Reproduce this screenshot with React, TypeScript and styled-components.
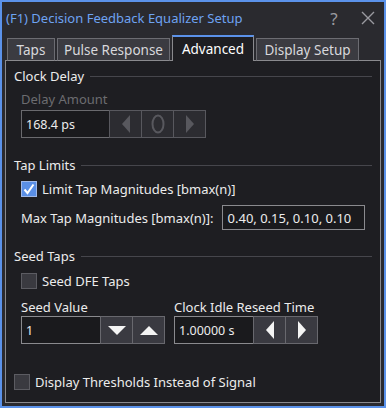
import styled, { createGlobalStyle } from 'styled-components';

const GlobalStyle = createGlobalStyle`
  body {
    margin: 0;
    background: #1e1e22;
    font-family: "Noto Sans", "DejaVu Sans", sans-serif;
  }
`;

const Tri = ({ dir, color }: { dir: 'left' | 'right' | 'up' | 'down'; color: string }) => {
  const paths: Record<string, string> = {
    left: 'M9 0 L9 18 L1 9 Z',
    right: 'M1 0 L1 18 L9 9 Z',
    down: 'M0 1 L18 1 L9 10 Z',
    up: 'M0 10 L18 10 L9 1 Z',
  };
  const horiz = dir === 'left' || dir === 'right';
  return (
    <svg width={horiz ? 10 : 18} height={horiz ? 18 : 11} viewBox={horiz ? '0 0 10 18' : '0 0 18 11'}>
      <path d={paths[dir]} fill={color} />
    </svg>
  );
};

const Zero = () => (
  <svg width="14" height="20" viewBox="0 0 14 20">
    <ellipse cx="7" cy="10" rx="5.5" ry="8.5" fill="none" stroke="#58585e" strokeWidth="2" />
  </svg>
);

const Check = () => (
  <svg width="12" height="12" viewBox="0 0 12 12">
    <path d="M1.5 6.5 L4.5 10 L10.5 1.5" fill="none" stroke="#fff" strokeWidth="2" />
  </svg>
);

const tabs = [
  { label: 'Taps', width: 48 },
  { label: 'Pulse Response', width: 113 },
  { label: 'Advanced', width: 82, active: true },
  { label: 'Display Setup', width: 103 },
];

export default function App() {
  return (
    <>
      <GlobalStyle />
      <Window>
        <TitleBar>
          <Title>(F1) Decision Feedback Equalizer Setup</Title>
          <TitleButton>?</TitleButton>
          <TitleButton>
            <svg width="14" height="14" viewBox="0 0 14 14">
              <path d="M1 1 L13 13 M13 1 L1 13" stroke="#9a9aa0" strokeWidth="1.4" />
            </svg>
          </TitleButton>
        </TitleBar>
        <TabRow>
          {tabs.map(t => (
            <Tab key={t.label} $active={t.active} $width={t.width}>
              {t.label}
            </Tab>
          ))}
        </TabRow>
        <Panel>
          <SectionHeader>
            <span>Clock Delay</span>
            <Rule />
          </SectionHeader>
          <Indented>
            <FieldLabel $disabled $gap={2}>Delay Amount</FieldLabel>
            <Spinner>
              <ValueBox $width={89} $disabled>168.4 ps</ValueBox>
              <SpinButton $disabled>
                <Tri dir="left" color="#58585e" />
              </SpinButton>
              <SpinButton $disabled>
                <Zero />
              </SpinButton>
              <SpinButton $disabled>
                <Tri dir="right" color="#58585e" />
              </SpinButton>
            </Spinner>
          </Indented>

          <SectionHeader $top={18}>
            <span>Tap Limits</span>
            <Rule />
          </SectionHeader>
          <Indented>
            <CheckRow $top={6}>
              <Box $checked>
                <Check />
              </Box>
              <span>Limit Tap Magnitudes [bmax(n)]</span>
            </CheckRow>
            <InlineField>
              <span>Max Tap Magnitudes [bmax(n)]:</span>
              <TextInput>0.40, 0.15, 0.10, 0.10</TextInput>
            </InlineField>
          </Indented>

          <SectionHeader $top={17}>
            <span>Seed Taps</span>
            <Rule />
          </SectionHeader>
          <Indented>
            <CheckRow $top={7}>
              <Box />
              <span>Seed DFE Taps</span>
            </CheckRow>
            <FieldGrid>
              <div>
                <FieldLabel $gap={0}>Seed Value</FieldLabel>
                <Spinner>
                  <ValueBox $width={80}>1</ValueBox>
                  <SpinButton>
                    <Tri dir="down" color="#f4f4f4" />
                  </SpinButton>
                  <SpinButton>
                    <Tri dir="up" color="#f4f4f4" />
                  </SpinButton>
                </Spinner>
              </div>
              <div>
                <FieldLabel $gap={0}>Clock Idle Reseed Time</FieldLabel>
                <Spinner>
                  <ValueBox $width={80}>1.00000 s</ValueBox>
                  <SpinButton>
                    <Tri dir="left" color="#f4f4f4" />
                  </SpinButton>
                  <SpinButton>
                    <Tri dir="right" color="#f4f4f4" />
                  </SpinButton>
                </Spinner>
              </div>
            </FieldGrid>
          </Indented>
          <CheckRow $top={29}>
            <Box />
            <span>Display Thresholds Instead of Signal</span>
          </CheckRow>
        </Panel>
      </Window>
    </>
  );
}

const Window = styled.div`
  box-sizing: border-box;
  width: 386px;
  height: 408px;
  border: 2px solid #5b92ea;
  background: #2a2a2f;
  display: flex;
  flex-direction: column;
  color: #ececec;
  font-size: 13px;
`;

const TitleBar = styled.div`
  flex: none;
  height: 32px;
  display: flex;
  align-items: center;
  padding: 0 8px 0 4px;
  gap: 18px;
`;

const Title = styled.div`
  flex: 1;
  color: #6ea3f2;
  font-size: 13px;
  white-space: nowrap;
`;

const TitleButton = styled.div`
  color: #9a9aa0;
  font-size: 17px;
  width: 16px;
  display: flex;
  justify-content: center;
`;

const TabRow = styled.div`
  flex: none;
  display: flex;
  align-items: flex-end;
  gap: 2px;
  height: 27px;
  margin: 0 0 -1px 5px;
  position: relative;
  z-index: 1;
`;

const Tab = styled.div<{ $active?: boolean; $width: number }>`
  box-sizing: border-box;
  width: ${p => p.$width}px;
  height: ${p => (p.$active ? 26 : 23)}px;
  display: flex;
  align-items: center;
  justify-content: center;
  white-space: nowrap;
  background: ${p => (p.$active ? '#1e1e22' : '#3b3b41')};
  border: 1px solid ${p => (p.$active ? '#8a8a8e' : '#6c6c72')};
  border-top: ${p => (p.$active ? '2px solid #5b92ea' : '1px solid #6c6c72')};
  border-bottom: ${p => (p.$active ? 'none' : '1px solid #8a8a8e')};
  color: ${p => (p.$active ? '#ffffff' : '#d8d8dc')};
  font-size: 13.5px;
`;

const Panel = styled.div`
  flex: 1;
  margin: 0 3px 3px 3px;
  border: 1px solid #8a8a8e;
  background: #1e1e22;
  padding: 6px 8px 0 8px;
  display: flex;
  flex-direction: column;
`;

const SectionHeader = styled.div<{ $top?: number }>`
  display: flex;
  align-items: center;
  gap: 6px;
  margin-top: ${p => p.$top ?? 0}px;
  height: 18px;
`;

const Rule = styled.div`
  flex: 1;
  height: 1px;
  background: #46464c;
`;

const Indented = styled.div`
  padding-left: 7px;
  display: flex;
  flex-direction: column;
`;

const FieldLabel = styled.div<{ $disabled?: boolean; $gap: number }>`
  color: ${p => (p.$disabled ? '#6c6c70' : '#ececec')};
  margin: 5px 0 ${p => p.$gap}px;
  height: 18px;
  display: flex;
  align-items: center;
  white-space: nowrap;
`;

const Spinner = styled.div`
  display: flex;
`;

const ValueBox = styled.div<{ $width: number; $disabled?: boolean }>`
  box-sizing: border-box;
  width: ${p => p.$width}px;
  height: 28px;
  border: 1px solid ${p => (p.$disabled ? '#6a6a6e' : '#8a8a8e')};
  background: #1a1a1d;
  display: flex;
  align-items: center;
  padding-left: 4px;
  font-size: 12.5px;
`;

const SpinButton = styled.div<{ $disabled?: boolean }>`
  box-sizing: border-box;
  width: 33px;
  height: 28px;
  margin-left: -1px;
  border: 1px solid ${p => (p.$disabled ? '#58585e' : '#68686e')};
  background: ${p => (p.$disabled ? '#2c2c31' : '#3a3a41')};
  display: flex;
  align-items: center;
  justify-content: center;
`;

const CheckRow = styled.div<{ $top?: number }>`
  display: flex;
  align-items: center;
  gap: 5px;
  margin-top: ${p => p.$top ?? 0}px;
  height: 18px;
`;

const Box = styled.div<{ $checked?: boolean }>`
  box-sizing: border-box;
  width: 16px;
  height: 16px;
  border: 1px solid ${p => (p.$checked ? '#9fb8e8' : '#5c5c62')};
  background: ${p => (p.$checked ? '#5a8fe6' : '#3a3a40')};
  display: flex;
  align-items: center;
  justify-content: center;
`;

const InlineField = styled.div`
  display: flex;
  align-items: center;
  gap: 8px;
  margin-top: 7px;
`;

const TextInput = styled.div`
  box-sizing: border-box;
  width: 143px;
  height: 25px;
  border: 1px solid #8a8a8e;
  background: #1a1a1d;
  display: flex;
  align-items: center;
  padding-left: 5px;
  white-space: nowrap;
  overflow: hidden;
`;

const FieldGrid = styled.div`
  display: grid;
  grid-template-columns: 153px 1fr;
  margin-top: 3px;
`;
